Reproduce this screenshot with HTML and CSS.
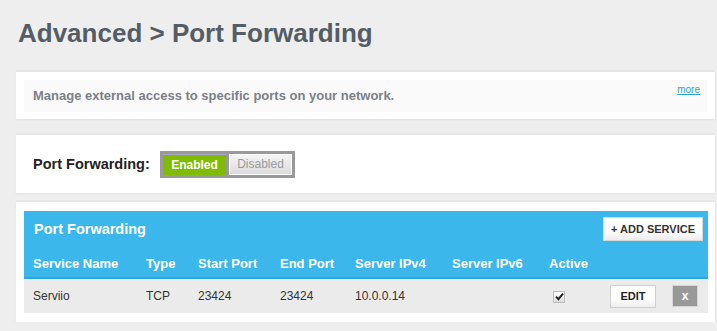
FILE: index.html
```html
<!DOCTYPE html>
<html lang="en">
<head>
    <meta charset="UTF-8">
    <title>Advanced > Port Forwarding</title>
    <link rel="stylesheet" href="styles.css">
</head>
<body>
    <div class="page">
        <h1 class="page-title">Advanced &gt; Port Forwarding</h1>

        <div class="card intro-card">
            <div class="intro-panel">
                <span class="intro-text">Manage external access to specific ports on your network.</span>
                <a class="more-link" href="#">more</a>
            </div>
        </div>

        <div class="card toggle-card">
            <span class="toggle-label">Port Forwarding:</span>
            <div class="toggle">
                <button class="toggle-btn on">Enabled</button>
                <button class="toggle-btn off">Disabled</button>
            </div>
        </div>

        <div class="card table-card">
            <div class="table-box">
                <div class="table-head">
                    <span class="table-title">Port Forwarding</span>
                    <button class="add-button">+ ADD SERVICE</button>
                </div>
                <table class="rules">
                    <colgroup>
                        <col style="width:113px">
                        <col style="width:52px">
                        <col style="width:82px">
                        <col style="width:75px">
                        <col style="width:97px">
                        <col style="width:97px">
                        <col style="width:61px">
                        <col style="width:62px">
                        <col>
                    </colgroup>
                    <thead>
                        <tr>
                            <th>Service Name</th>
                            <th>Type</th>
                            <th>Start Port</th>
                            <th>End Port</th>
                            <th>Server IPv4</th>
                            <th>Server IPv6</th>
                            <th>Active</th>
                            <th></th>
                            <th></th>
                        </tr>
                    </thead>
                    <tbody>
                        <tr>
                            <td>Serviio</td>
                            <td>TCP</td>
                            <td>23424</td>
                            <td>23424</td>
                            <td>10.0.0.14</td>
                            <td></td>
                            <td class="active-cell">
                                <span class="check">
                                    <svg width="9" height="9" viewBox="0 0 9 9"><path d="M1 4.6 L3.4 7.2 L8 1.6" fill="none" stroke="#222" stroke-width="1.9"/></svg>
                                </span>
                            </td>
                            <td><button class="edit-button">EDIT</button></td>
                            <td><button class="delete-button">x</button></td>
                        </tr>
                    </tbody>
                </table>
            </div>
        </div>
    </div>
</body>
</html>
```

FILE: styles.css
```css
body {
    margin: 0;
    background: #eeeeee;
    font-family: "Liberation Sans", Arial, sans-serif;
}

.page {
    padding: 0 2px 0 16px;
}

.page-title {
    margin: 0;
    padding: 18px 0 0 2px;
    height: 72px;
    box-sizing: border-box;
    font-size: 26px;
    font-weight: 700;
    color: #545d65;
}

.card {
    background: #ffffff;
    box-shadow: 0 -2px 0 #e6e6e6, 0 1px 2px rgba(0,0,0,0.06);
}

.intro-card {
    padding: 8px 8px 7px 8px;
}

.intro-panel {
    background: #fafafa;
    height: 32px;
    display: flex;
    align-items: flex-start;
    justify-content: space-between;
    padding: 0 7px 0 9px;
}

.intro-text {
    margin-top: 8px;
    font-size: 13px;
    font-weight: 700;
    color: #7b8189;
}

.more-link {
    margin-top: 4px;
    font-size: 10px;
    color: #2aa3c7;
}

.toggle-card {
    margin-top: 16px;
    height: 58px;
    display: flex;
    align-items: center;
    padding-left: 17px;
}

.toggle-label {
    font-size: 14.5px;
    font-weight: 700;
    color: #222222;
    width: 127px;
}

.toggle {
    display: flex;
    gap: 3px;
    background: #999999;
    padding: 3px;
}

.toggle-btn {
    width: 63px;
    height: 21px;
    padding: 0;
    border: none;
    font-family: "Liberation Sans", Arial, sans-serif;
    font-size: 12px;
    cursor: pointer;
}

.toggle-btn.on {
    background: #7fbb00;
    color: #ffffff;
    font-weight: 700;
    border-top: 1px solid #a7a6c8;
}

.toggle-btn.off {
    background: linear-gradient(#f4f4f4, #dcdcdc);
    color: #9a9a9a;
    border: 1px solid #ffffff;
}

.table-card {
    margin-top: 9px;
    padding: 9px 7px 9px 8px;
}

.table-box {
    background: #ebebeb;
}

.table-head {
    background: #3bb7ec;
    height: 36px;
    display: flex;
    align-items: center;
    justify-content: space-between;
    padding: 0 5px 0 10px;
}

.table-title {
    font-size: 14.5px;
    font-weight: 700;
    color: #ffffff;
}

.add-button {
    background: linear-gradient(#ffffff 60%, #ececec);
    border: 1px solid #d8d8d8;
    height: 24px;
    width: 100px;
    font-family: "Liberation Sans", Arial, sans-serif;
    font-size: 11px;
    font-weight: 700;
    color: #333333;
    cursor: pointer;
}

.rules {
    width: 100%;
    border-collapse: collapse;
    table-layout: fixed;
}

.rules th {
    background: #3bb7ec;
    color: #ffffff;
    font-size: 13px;
    font-weight: 700;
    text-align: left;
    height: 28px;
    padding: 2px 0 0 9px;
    border-bottom: 2px solid #2ea6d9;
}

.rules td {
    height: 34px;
    padding: 0 0 0 9px;
    font-size: 12px;
    color: #333333;
}

.active-cell {
    padding-left: 13px !important;
}

.check {
    display: inline-flex;
    align-items: center;
    justify-content: center;
    width: 10px;
    height: 10px;
    border: 1px solid #bdbdbd;
    background: linear-gradient(#ffffff, #dddddd);
    vertical-align: middle;
}

.edit-button {
    width: 46px;
    height: 23px;
    background: linear-gradient(#ffffff 60%, #eeeeee);
    border: 1px solid #d0d0d0;
    font-family: "Liberation Sans", Arial, sans-serif;
    font-size: 11px;
    font-weight: 700;
    color: #222222;
    cursor: pointer;
}

.delete-button {
    width: 26px;
    height: 22px;
    background: #999999;
    border: 1px solid #d6d6d6;
    color: #ffffff;
    font-family: "Liberation Sans", Arial, sans-serif;
    font-size: 12px;
    font-weight: 700;
    cursor: pointer;
}
```
